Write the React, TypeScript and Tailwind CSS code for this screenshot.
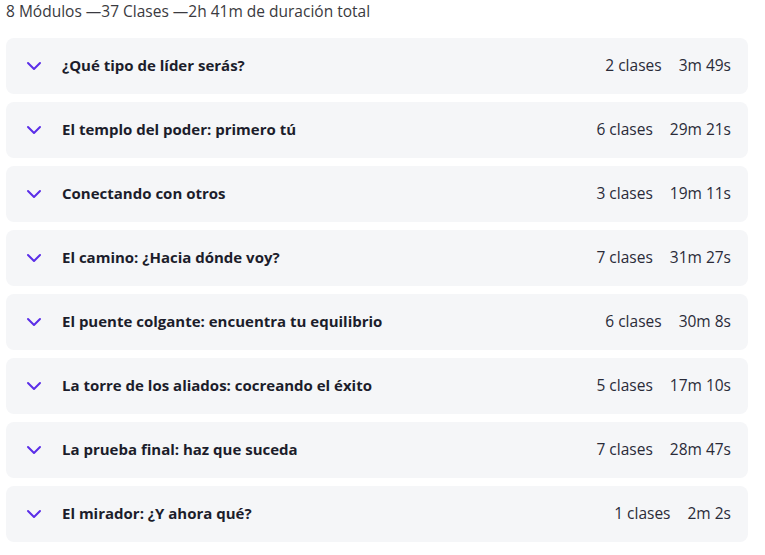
import React from 'react';

type Modulo = {
  titulo: string;
  clases: number;
  duracion: string;
};

const modulos: Modulo[] = [
  { titulo: '¿Qué tipo de líder serás?', clases: 2, duracion: '3m 49s' },
  { titulo: 'El templo del poder: primero tú', clases: 6, duracion: '29m 21s' },
  { titulo: 'Conectando con otros', clases: 3, duracion: '19m 11s' },
  { titulo: 'El camino: ¿Hacia dónde voy?', clases: 7, duracion: '31m 27s' },
  { titulo: 'El puente colgante: encuentra tu equilibrio', clases: 6, duracion: '30m 8s' },
  { titulo: 'La torre de los aliados: cocreando el éxito', clases: 5, duracion: '17m 10s' },
  { titulo: 'La prueba final: haz que suceda', clases: 7, duracion: '28m 47s' },
  { titulo: 'El mirador: ¿Y ahora qué?', clases: 1, duracion: '2m 2s' },
];

const Chevron = () => (
  <svg width="16" height="10" viewBox="0 0 16 10" fill="none" className="shrink-0 mt-[2px]">
    <path d="M2 2l6 6 6-6" stroke="#5b2ee8" strokeWidth="2" strokeLinecap="round" strokeLinejoin="round" />
  </svg>
);

const App: React.FC = () => {
  return (
    <div className="w-[765px] h-[555px] bg-white font-['Open_Sans',sans-serif] text-[#1c1d2b]">
      <p className="pl-[6px] pt-px text-[15.5px] leading-[20px] text-[#3a3a40]">
        8 Módulos —37 Clases —2h 41m de duración total
      </p>

      <div className="mt-[17px] flex w-[742px] ml-[6px] flex-col gap-2">
        {modulos.map((m, i) => (
          <div
            key={i}
            className="flex h-[56px] items-center rounded-[8px] bg-[#f5f6f8] pl-[20px] pr-[17px] pb-[2px] leading-[20px]"
          >
            <Chevron />
            <span className="ml-[20px] flex-1 text-[15px] font-bold -mt-px">
              {m.titulo}
            </span>
            <span className="text-[15.5px] text-[#2a2b38]">{m.clases} clases</span>
            <span className="ml-[17px] text-[15.5px] text-[#2a2b38]">{m.duracion}</span>
          </div>
        ))}
      </div>
    </div>
  );
};

export default App;
